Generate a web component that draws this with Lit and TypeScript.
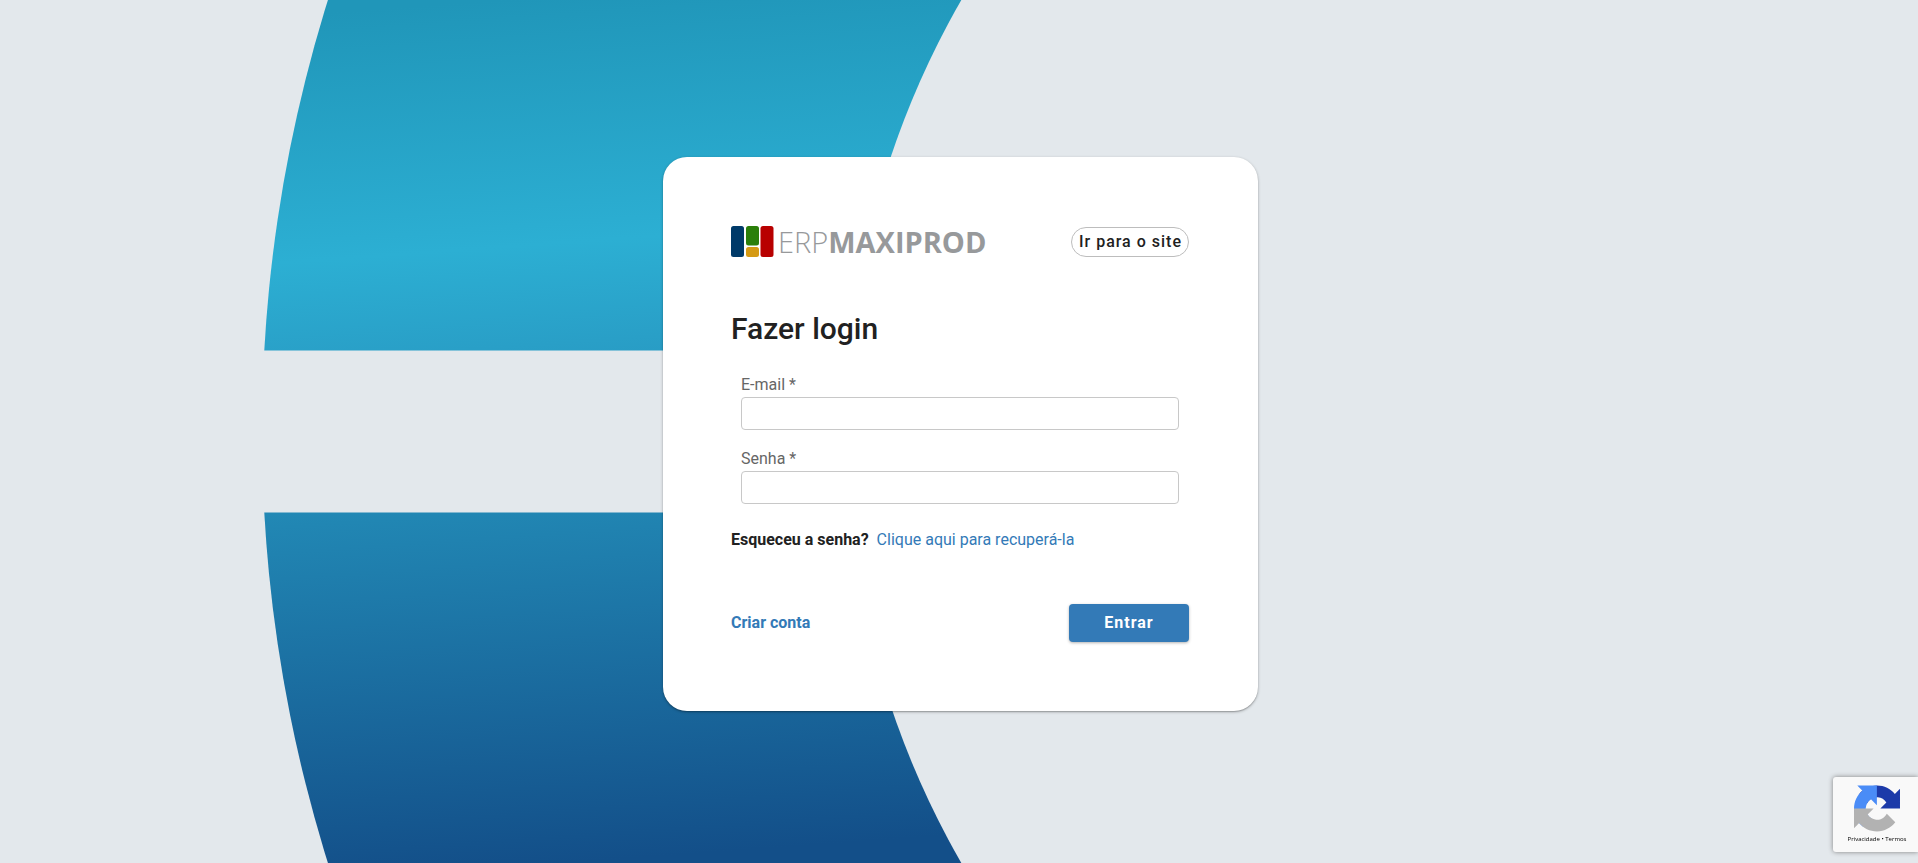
import { LitElement, html, css } from "lit";
import { customElement } from "lit/decorators.js";

@customElement("brand-backdrop")
class BrandBackdrop extends LitElement {
  static styles = css`
    :host {
      display: block;
    }
    svg {
      display: block;
      width: 100%;
      height: 100%;
    }
  `;

  render() {
    return html`
      <svg viewBox="0 0 1918 863" preserveAspectRatio="xMidYMid slice" aria-hidden="true">
        <defs>
          <linearGradient id="sea" gradientUnits="userSpaceOnUse" x1="500" y1="0" x2="562" y2="863">
            <stop offset="0" stop-color="#2096b9" />
            <stop offset="0.285" stop-color="#2cafd3" />
            <stop offset="0.4" stop-color="#299fc7" />
            <stop offset="0.59" stop-color="#2186b3" />
            <stop offset="1" stop-color="#134f89" />
          </linearGradient>
          <clipPath id="bands">
            <rect x="0" y="0" width="1918" height="350.5" />
            <rect x="0" y="512.5" width="1918" height="351" />
          </clipPath>
        </defs>
        <circle cx="1707" cy="431.5" r="1445" fill="url(#sea)" clip-path="url(#bands)" />
        <circle cx="1711" cy="431.5" r="865" fill="#e3e8ec" />
      </svg>
    `;
  }
}

@customElement("maxiprod-logo")
class MaxiprodLogo extends LitElement {
  static styles = css`
    :host {
      display: flex;
      align-items: center;
      gap: 4px;
      color: #97999b;
      font: 29px/31px "Open Sans", "Noto Sans", sans-serif;
    }
    svg {
      display: block;
    }
    .light {
      font-weight: 300;
    }
    .bold {
      font-weight: 700;
    }
  `;

  render() {
    return html`
      <svg width="43" height="31" viewBox="0 0 43 31" aria-hidden="true">
        <rect width="13" height="31" rx="2.5" fill="#003a69" />
        <rect x="15" width="13" height="19.5" rx="2.5" fill="#2b7f0a" />
        <rect x="15" y="21" width="13" height="10" rx="2.5" fill="#d59a14" />
        <rect x="29.5" width="13" height="31" rx="2.5" fill="#b80000" />
      </svg>
      <span><span class="light">ERP</span><span class="bold">MAXIPROD</span></span>
    `;
  }
}

@customElement("recaptcha-badge")
class RecaptchaBadge extends LitElement {
  static styles = css`
    :host {
      display: flex;
      flex-direction: column;
      align-items: center;
      gap: 3px;
      box-sizing: border-box;
      width: 85px;
      height: 75px;
      padding: 8px 0 0 3px;
      background: #f9f9f9;
      border-radius: 3px 0 0 3px;
      box-shadow: 0 0 5px #808080;
    }
    .links {
      font: 6px/8px "Open Sans", sans-serif;
      white-space: nowrap;
      color: #000;
    }
    a {
      color: inherit;
      text-decoration: none;
    }
  `;

  render() {
    return html`
      <svg width="46" height="47" viewBox="0 0 64 64" aria-hidden="true">
        <path fill="#1c3aa9" d="M64 31.955l-.033-1.37V4.687l-7.16 7.16C50.948 4.674 42.033.093 32.05.093c-10.389 0-19.622 4.96-25.458 12.64l11.736 11.86a15.55 15.55 0 0 1 4.754-5.334c2.05-1.6 4.952-2.906 8.968-2.906.485 0 .86.057 1.135.163 4.976.393 9.288 3.14 11.828 7.124l-8.307 8.307L64 31.953" />
        <path fill="#4a8cf7" d="M31.862.094l-1.37.033H4.594l7.16 7.16C4.58 13.147 0 22.06 0 32.046c0 10.389 4.96 19.622 12.64 25.458L24.5 45.768a15.55 15.55 0 0 1-5.334-4.754c-1.6-2.05-2.906-4.952-2.906-8.968 0-.485.057-.86.163-1.135.393-4.976 3.14-9.288 7.124-11.828l8.307 8.307L31.86.095" />
        <path fill="#b2b2b2" d="M.001 32.045l.033 1.37v25.898l7.16-7.16c5.86 7.173 14.774 11.754 24.76 11.754 10.389 0 19.622-4.96 25.458-12.64l-11.736-11.86a15.55 15.55 0 0 1-4.754 5.334c-2.05 1.6-4.952 2.906-8.968 2.906-.485 0-.86-.057-1.135-.163-4.976-.393-9.288-3.14-11.828-7.124l8.307-8.307c-10.522.04-22.4.066-27.295-.005" />
      </svg>
      <div class="links"><a href="#privacidade">Privacidade</a> • <a href="#termos">Termos</a></div>
    `;
  }
}

@customElement("app-root")
class AppRoot extends LitElement {
  static styles = css`
    :host {
      display: grid;
      place-items: center;
      position: relative;
      box-sizing: border-box;
      min-height: 100vh;
      padding: 5px 0 0 3px;
      overflow: hidden;
      background: #e3e8ec;
      color: #212121;
      font: 16px/24px Roboto, sans-serif;
    }
    brand-backdrop {
      position: absolute;
      inset: 0;
    }
    recaptcha-badge {
      position: fixed;
      right: 0;
      bottom: 11px;
    }
    .card {
      position: relative;
      box-sizing: border-box;
      width: 100%;
      max-width: 595px;
      padding: 69px 69px 69px 68px;
      background: #fff;
      border-radius: 24px;
      box-shadow: 0 1px 3px rgba(0, 0, 0, 0.3), 0 1px 1px rgba(0, 0, 0, 0.14);
    }
    .row {
      display: flex;
      align-items: center;
      justify-content: space-between;
    }
    a {
      color: #337ab7;
      text-decoration: none;
    }
    .site {
      box-sizing: border-box;
      height: 30px;
      padding: 0 6px 0 7px;
      border: 1px solid #bdbdbd;
      border-radius: 15px;
      color: #212121;
      font-weight: 500;
      line-height: 28px;
      letter-spacing: 1px;
    }
    h1 {
      margin: 52px 0 24px;
      font-size: 30px;
      font-weight: 500;
      line-height: 40px;
    }
    .fields {
      display: grid;
      gap: 17px;
      padding: 0 10px;
    }
    .field {
      display: grid;
    }
    label {
      color: #666;
    }
    input {
      box-sizing: border-box;
      width: 100%;
      height: 33px;
      padding: 0 8px;
      border: 1px solid #c8c8c8;
      border-radius: 4px;
      background: #fff;
      font: inherit;
    }
    .forgot {
      display: flex;
      gap: 8px;
      margin: 24px 0 52px;
    }
    .strong {
      font-weight: 700;
    }
    button {
      width: 120px;
      height: 38px;
      padding: 0;
      border: 0;
      border-radius: 4px;
      background: #337ab7;
      color: #fff;
      font: inherit;
      font-weight: 700;
      letter-spacing: 1px;
      box-shadow: 0 1px 3px rgba(0, 0, 0, 0.3);
    }
  `;

  render() {
    return html`
      <brand-backdrop></brand-backdrop>
      <main class="card">
        <header class="row">
          <maxiprod-logo></maxiprod-logo>
          <a class="site" href="#site">Ir para o site</a>
        </header>
        <h1>Fazer login</h1>
        <form @submit=${(e: Event) => e.preventDefault()}>
          <div class="fields">
            <div class="field">
              <label for="email">E-mail *</label>
              <input id="email" type="text" autocomplete="username" />
            </div>
            <div class="field">
              <label for="senha">Senha *</label>
              <input id="senha" type="password" autocomplete="current-password" />
            </div>
          </div>
          <div class="forgot">
            <span class="strong">Esqueceu a senha?</span>
            <a href="#recuperar">Clique aqui para recuperá-la</a>
          </div>
          <div class="row">
            <a class="strong" href="#criar">Criar conta</a>
            <button type="submit">Entrar</button>
          </div>
        </form>
      </main>
      <recaptcha-badge></recaptcha-badge>
    `;
  }
}
